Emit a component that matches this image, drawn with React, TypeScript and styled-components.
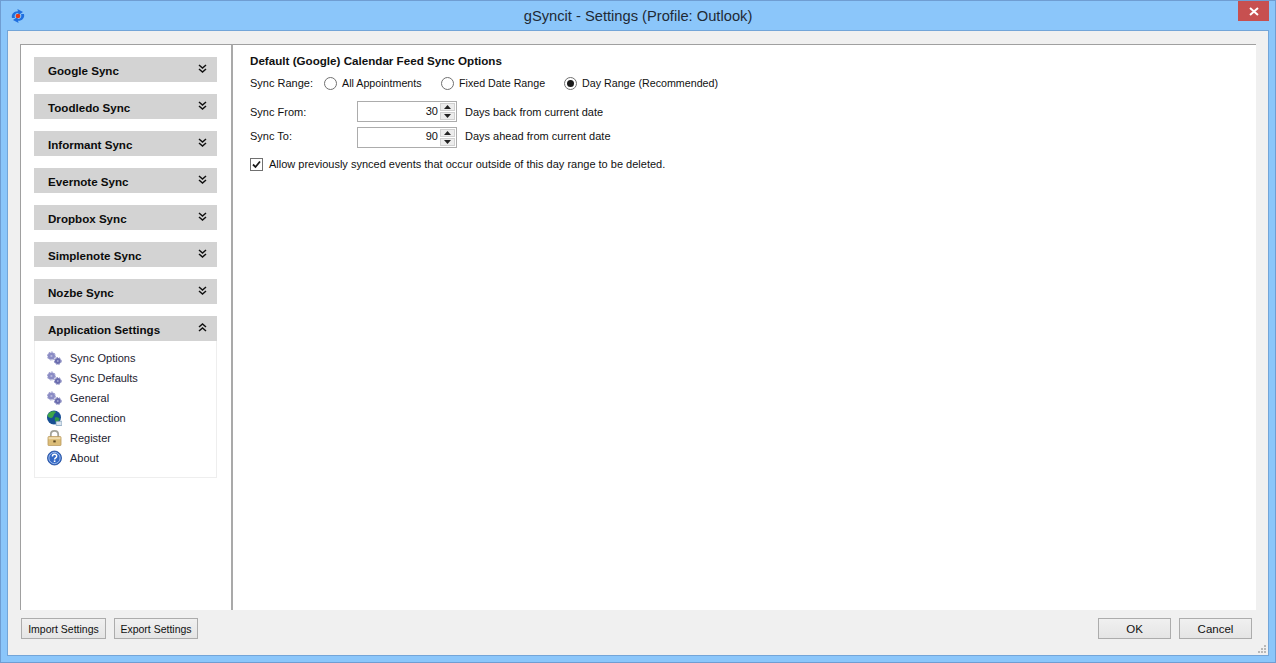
import React from 'react';
import styled, { createGlobalStyle } from 'styled-components';

const GlobalStyle = createGlobalStyle`
  html, body {
    margin: 0;
    padding: 0;
    width: 1276px;
    height: 663px;
    overflow: hidden;
    background: #8bc6fa;
  }
  * { box-sizing: border-box; }
`;

const UI_FONT = `"Liberation Sans", Arial, sans-serif`;

/* WINDOW FRAME */
const Window = styled.div`
  width: 1276px;
  height: 663px;
  display: flex;
  flex-direction: column;
  background: #8bc6fa;
  border: 1px solid #6f9dd2;
  font-family: ${UI_FONT};
  font-size: 11px;
  color: #111;
`;

const TitleBar = styled.div`
  height: 29px;
  flex: none;
  display: flex;
  align-items: flex-start;
  position: relative;
  padding-left: 9px;
`;

const AppIcon = styled.svg`
  width: 16px;
  height: 16px;
  margin-top: 7px;
`;

const Title = styled.div`
  position: absolute;
  left: 0;
  right: 0;
  top: 4px;
  text-align: center;
  font-size: 14.7px;
  line-height: 22px;
  color: #1f2a36;
`;

const CloseButton = styled.div`
  position: absolute;
  top: 0;
  right: 6px;
  width: 31px;
  height: 20px;
  background: #c75050;
  display: flex;
  align-items: center;
  justify-content: center;
`;

const Client = styled.div`
  flex: 1;
  margin: 0 6px 6px 6px;
  display: flex;
  flex-direction: column;
  background: #f0f0f0;
  border: 1px solid #73a5d8;
  padding: 13px 12px 0 12px;
  position: relative;
`;

const Panels = styled.div`
  height: 566px;
  flex: none;
  display: flex;
`;

/* SIDEBAR */
const Sidebar = styled.div`
  width: 213px;
  flex: none;
  background: #fff;
  border-top: 1px solid #a0a0a0;
  border-left: 1px solid #a0a0a0;
  border-right: 2px solid #a9a9a9;
  padding: 12px 14px 0 13px;
  display: flex;
  flex-direction: column;
  gap: 12px;
`;

const Group = styled.div`
  display: flex;
  flex-direction: column;
`;

const GroupHeader = styled.div`
  height: 25px;
  background: #d3d3d3;
  display: flex;
  align-items: center;
  justify-content: space-between;
  padding: 2px 10px 0 14px;
  font-weight: 700;
  font-size: 11.6px;
  color: #0c0c0c;
`;

const Chevron = styled.svg<{ $up?: boolean }>`
  width: 9px;
  height: 9px;
  margin-top: -4px;
  transform: ${(p) => (p.$up ? 'rotate(180deg)' : 'none')};
`;

const GroupBody = styled.div`
  height: 137px;
  border: 1px solid #eeeeee;
  border-top: none;
  padding: 7px 0 0 12px;
  display: flex;
  flex-direction: column;
`;

const NavItem = styled.div`
  height: 20px;
  display: flex;
  align-items: center;
  gap: 8px;
  color: #1c2230;
`;

const NavIcon = styled.svg`
  width: 15px;
  height: 16px;
  flex: none;
`;

/* SETTINGS PANEL */
const Content = styled.div`
  flex: 1;
  background: #fff;
  border-top: 1px solid #a0a0a0;
  padding: 8px 17px;
  display: flex;
  flex-direction: column;
`;

const Heading = styled.div`
  font-weight: 700;
  font-size: 11.64px;
  line-height: 15px;
  color: #111;
`;

const RangeRow = styled.div`
  margin-top: 7px;
  height: 16px;
  display: flex;
  align-items: center;
`;

const FieldLabel = styled.span<{ $width: number; $lift?: number }>`
  width: ${(p) => p.$width}px;
  padding-bottom: ${(p) => p.$lift ?? 0}px;
  flex: none;
`;

const RadioOption = styled.span<{ $width: number }>`
  width: ${(p) => p.$width}px;
  flex: none;
  display: flex;
  align-items: center;
  gap: 5px;
  font-size: 10.7px;
`;

const RadioDot = styled.span<{ $checked?: boolean }>`
  width: 13px;
  height: 13px;
  border-radius: 50%;
  border: 1px solid #707070;
  background: #fff;
  flex: none;
  display: flex;
  align-items: center;
  justify-content: center;

  &::after {
    content: '';
    display: ${(p) => (p.$checked ? 'block' : 'none')};
    width: 7px;
    height: 7px;
    border-radius: 50%;
    background: #1a1a1a;
  }
`;

const SpinRows = styled.div`
  margin-top: 10px;
  display: flex;
  flex-direction: column;
  gap: 5px;
`;

const SpinRow = styled.div`
  height: 21px;
  display: flex;
  align-items: center;
`;

const RowText = styled.span<{ $lift?: number }>`
  padding-bottom: ${(p) => p.$lift ?? 0}px;
`;

const SpinBox = styled.div`
  width: 100px;
  height: 21px;
  flex: none;
  border: 1px solid #acacac;
  background: #fff;
  display: flex;
  justify-content: flex-end;
  align-items: center;
  margin-right: 8px;
`;

const SpinValue = styled.div<{ $lift: number }>`
  padding: 0 2px ${(p) => p.$lift}px 0;
`;

const SpinButtons = styled.div`
  width: 15px;
  height: 17px;
  margin-right: 1px;
  display: flex;
  flex-direction: column;
  gap: 1px;
`;

const SpinArrow = styled.div`
  flex: 1;
  background: #ececec;
  border: 1px solid #d0d0d0;
  display: flex;
  align-items: center;
  justify-content: center;
`;

const CheckRow = styled.div`
  margin-top: 9px;
  height: 14px;
  display: flex;
  align-items: center;
  gap: 6px;
`;

const CheckBox = styled.span`
  width: 13px;
  height: 13px;
  flex: none;
  border: 1px solid #707070;
  background: #fff;
  display: flex;
  align-items: center;
  justify-content: center;
`;

/* FOOTER */
const Footer = styled.div`
  flex: 1;
  display: flex;
  align-items: flex-start;
  padding: 8px 4px 0 1px;
  gap: 8px;
`;

const Spacer = styled.div`
  flex: 1;
`;

const Button = styled.div<{ $width: number; $compact?: boolean }>`
  width: ${(p) => p.$width}px;
  height: 21px;
  border: 1px solid #acacac;
  background: linear-gradient(#f0f0f0, #e5e5e5);
  display: flex;
  align-items: center;
  justify-content: center;
  white-space: nowrap;
  font-size: ${(p) => (p.$compact ? '10.5px' : '11.5px')};
  color: #111;
`;

const Grip = styled.svg`
  position: absolute;
  right: 1px;
  bottom: 1px;
  width: 10px;
  height: 10px;
`;

const Gears = () => (
  <NavIcon viewBox="0 0 15 16">
    <circle cx="4.4" cy="6" r="3.6" fill="#8b8cc4" />
    <circle cx="4.4" cy="6" r="4" fill="none" stroke="#9a9bcc" strokeWidth="1" strokeDasharray="2 1" />
    <circle cx="4.4" cy="6" r="1.1" fill="#b9bade" />
    <circle cx="10.8" cy="11" r="3" fill="#6a6cae" />
    <circle cx="10.8" cy="11" r="3.4" fill="none" stroke="#7a7cb8" strokeWidth="1" strokeDasharray="1.8 1" />
    <circle cx="10.8" cy="11" r="0.9" fill="#a9aad4" />
  </NavIcon>
);

const Globe = () => (
  <NavIcon viewBox="0 0 15 16">
    <circle cx="7" cy="7.5" r="7" fill="#174f94" />
    <path d="M2.6 2.6C4.8.8 7.8.8 9 1.8c-.4 1.6-1.8 1.6-2.2 3.2C6.4 6.4 5.6 8 4 8 2.4 8 .6 6.6.6 5.4.8 4.4 1.8 3.4 2.6 2.6z" fill="#3fa648" />
    <path d="M8 7.6c1.8-.7 3.8 0 4.6 1.2-.4 1.8-1.8 3.4-3.4 4-.9-1.1-1.9-3.4-1.2-5.2z" fill="#2f9a45" />
    <rect x="9" y="11.2" width="6" height="4.4" rx="0.6" fill="#d9e4ee" stroke="#6f8fae" strokeWidth="0.7" />
  </NavIcon>
);

const Lock = () => (
  <NavIcon viewBox="0 0 15 16">
    <path d="M3.8 7V4.4C3.8 2.2 5.4.9 7.5.9s3.7 1.3 3.7 3.5V7" fill="none" stroke="#a3a39a" strokeWidth="1.8" />
    <rect x="1" y="6.6" width="13" height="9" rx="0.8" fill="#dcbd78" stroke="#b8975a" strokeWidth="0.8" />
    <rect x="1.6" y="7.2" width="11.8" height="2" fill="#efdcae" />
    <rect x="6.3" y="10.4" width="2.4" height="2" fill="#5d4820" />
  </NavIcon>
);

const Help = () => (
  <NavIcon viewBox="0 0 15 16">
    <circle cx="7.5" cy="8" r="7" fill="#3468c4" stroke="#1f4a9a" strokeWidth="0.8" />
    <circle cx="7.5" cy="8" r="5.6" fill="none" stroke="#a9c4ee" strokeWidth="0.9" />
    <path d="M5.4 6.4c0-1.4 1-2.1 2.2-2.1s2.1.8 2.1 1.9c0 1.7-2.1 1.6-2.1 3.2" fill="none" stroke="#fff" strokeWidth="1.4" />
    <rect x="6.8" y="10.4" width="1.6" height="1.6" fill="#fff" />
  </NavIcon>
);

const DoubleChevron: React.FC<{ up?: boolean }> = ({ up }) => (
  <Chevron $up={up} viewBox="0 0 9 9">
    <path d="M1 1l3.5 3L8 1M1 5l3.5 3L8 5" fill="none" stroke="#111" strokeWidth="1.5" />
  </Chevron>
);

const collapsedGroups = [
  'Google Sync',
  'Toodledo Sync',
  'Informant Sync',
  'Evernote Sync',
  'Dropbox Sync',
  'Simplenote Sync',
  'Nozbe Sync',
];

const navItems = [
  { label: 'Sync Options', icon: <Gears /> },
  { label: 'Sync Defaults', icon: <Gears /> },
  { label: 'General', icon: <Gears /> },
  { label: 'Connection', icon: <Globe /> },
  { label: 'Register', icon: <Lock /> },
  { label: 'About', icon: <Help /> },
];

const Spinner: React.FC<{ value: string; lift: number }> = ({ value, lift }) => (
  <SpinBox>
    <SpinValue $lift={lift}>{value}</SpinValue>
    <SpinButtons>
      <SpinArrow>
        <svg width="7" height="4" viewBox="0 0 7 4">
          <path d="M3.5 0L7 4H0z" fill="#222" />
        </svg>
      </SpinArrow>
      <SpinArrow>
        <svg width="7" height="4" viewBox="0 0 7 4">
          <path d="M0 0h7L3.5 4z" fill="#222" />
        </svg>
      </SpinArrow>
    </SpinButtons>
  </SpinBox>
);

const App: React.FC = () => (
  <Window>
    <GlobalStyle />
    <TitleBar>
      <AppIcon viewBox="0 0 16 16">
        <path d="M2 10C1 6 4 3 8 3.2L7.4 1 13 4l-4.4 3-.4-2C5.6 5 4 7 5 10z" fill="#1f6fe0" />
        <path d="M14 6c1 4-2 7-6 6.8l.6 2.2L3 12l4.4-3 .4 2c2.6 0 4.2-2 3.2-5z" fill="#1f6fe0" />
        <circle cx="8" cy="8" r="2.3" fill="#e23a1c" />
      </AppIcon>
      <Title>gSyncit - Settings (Profile: Outlook)</Title>
      <CloseButton>
        <svg width="10" height="9" viewBox="0 0 10 9">
          <path d="M1 1l8 7M9 1L1 8" stroke="#fff" strokeWidth="2" />
        </svg>
      </CloseButton>
    </TitleBar>
    <Client>
      <Panels>
        <Sidebar>
          {collapsedGroups.map((name) => (
            <GroupHeader key={name}>
              {name}
              <DoubleChevron />
            </GroupHeader>
          ))}
          <Group>
            <GroupHeader>
              Application Settings
              <DoubleChevron up />
            </GroupHeader>
            <GroupBody>
              {navItems.map((item) => (
                <NavItem key={item.label}>
                  {item.icon}
                  {item.label}
                </NavItem>
              ))}
            </GroupBody>
          </Group>
        </Sidebar>
        <Content>
          <Heading>Default (Google) Calendar Feed Sync Options</Heading>
          <RangeRow>
            <FieldLabel $width={74}>Sync Range:</FieldLabel>
            <RadioOption $width={117}>
              <RadioDot />
              All Appointments
            </RadioOption>
            <RadioOption $width={123}>
              <RadioDot />
              Fixed Date Range
            </RadioOption>
            <RadioOption $width={170}>
              <RadioDot $checked />
              Day Range (Recommended)
            </RadioOption>
          </RangeRow>
          <SpinRows>
            <SpinRow>
              <FieldLabel $width={107}>Sync From:</FieldLabel>
              <Spinner value="30" lift={1} />
              <RowText>Days back from current date</RowText>
            </SpinRow>
            <SpinRow>
              <FieldLabel $width={107} $lift={3}>Sync To:</FieldLabel>
              <Spinner value="90" lift={3} />
              <RowText $lift={3}>Days ahead from current date</RowText>
            </SpinRow>
          </SpinRows>
          <CheckRow>
            <CheckBox>
              <svg width="9" height="9" viewBox="0 0 9 9">
                <path d="M1 4.5l2.5 2.5L8 1.5" fill="none" stroke="#1a1a1a" strokeWidth="1.8" />
              </svg>
            </CheckBox>
            Allow previously synced events that occur outside of this day range to be deleted.
          </CheckRow>
        </Content>
      </Panels>
      <Footer>
        <Button $width={85} $compact>Import Settings</Button>
        <Button $width={84} $compact>Export Settings</Button>
        <Spacer />
        <Button $width={73}>OK</Button>
        <Button $width={73}>Cancel</Button>
      </Footer>
      <Grip viewBox="0 0 10 10">
        <path d="M7 1h2v2H7zM4 4h2v2H4zM7 4h2v2H7zM1 7h2v2H1zM4 7h2v2H4zM7 7h2v2H7z" fill="#b8b8b8" />
      </Grip>
    </Client>
  </Window>
);

export default App;
